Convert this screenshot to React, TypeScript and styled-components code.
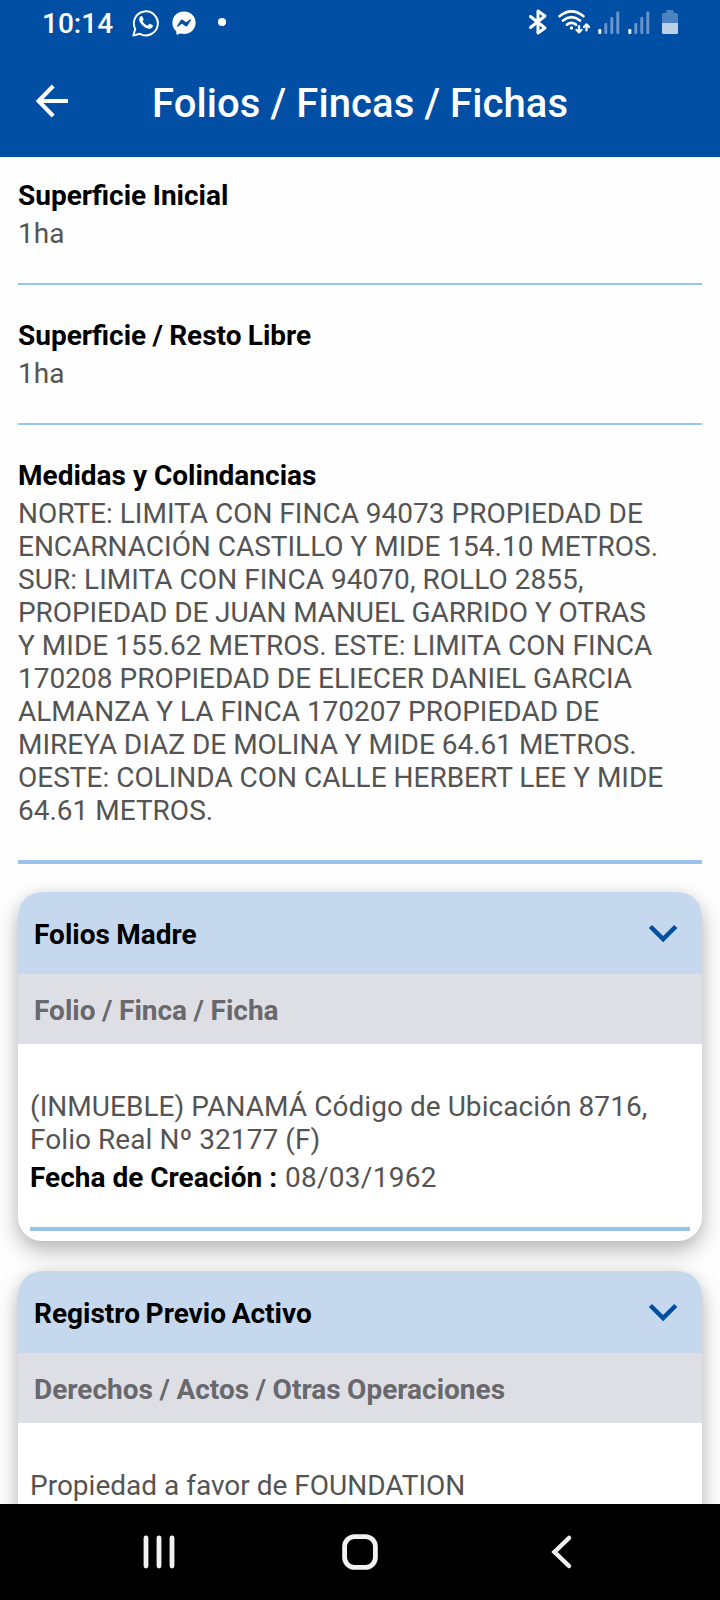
import React from "react";
import styled, { createGlobalStyle } from "styled-components";
import { FaFacebookMessenger } from "react-icons/fa";

const GlobalStyle = createGlobalStyle`
  * { box-sizing: border-box; }
  body {
    margin: 0;
    background: #fefefe;
    font-family: Roboto, "Liberation Sans", sans-serif;
    font-size: 28px;
    line-height: 33px;
    color: #545454;
  }
`;

const Screen = styled.div`
  width: 720px;
  height: 1600px;
  display: flex;
  flex-direction: column;
  overflow: hidden;
  background: #fefefe;
`;

const TopArea = styled.header`
  flex: none;
  height: 157px;
  background: #004fa4;
  color: #fff;
`;

const StatusBar = styled.div`
  height: 48px;
  display: flex;
  justify-content: space-between;
  padding: 0 40px 0 42px;
`;

const StatusGroup = styled.div`
  display: flex;
  align-items: flex-start;
`;

const Clock = styled.span`
  width: 90px;
  padding-top: 7px;
  font-weight: 500;
`;

const WhatsappIcon = styled.svg`
  width: 27px;
  height: 28px;
  margin-top: 9px;
`;

const MessengerIcon = styled(FaFacebookMessenger)`
  width: 24px;
  height: 24px;
  margin: 11px 0 0 13px;
`;

const MoreDot = styled.span`
  width: 8px;
  height: 8px;
  margin: 18px 0 0 22px;
  border-radius: 50%;
  background: #fff;
`;

const TitleBar = styled.div`
  height: 109px;
  display: flex;
  align-items: flex-start;
  padding-left: 36px;
`;

const BackIcon = styled.svg`
  width: 32px;
  height: 34px;
  margin-top: 36px;
`;

const Title = styled.h1`
  margin: 32px 0 0 84px;
  font-size: 40px;
  line-height: 48px;
  font-weight: 500;
  letter-spacing: 0.09px;
`;

const Content = styled.main`
  flex: 1;
  min-height: 0;
  overflow: hidden;
  padding: 0 18px;
`;

const Field = styled.section<{ $first?: boolean; $thick?: boolean }>`
  display: flex;
  flex-direction: column;
  gap: 5px;
  padding: ${(p) => (p.$first ? 22 : 34)}px 0 33px;
  border-bottom: ${(p) => (p.$thick ? 4 : 2)}px solid #98c3ed;
`;

const Label = styled.strong<{ $wordGap?: number }>`
  font-weight: 700;
  color: #000;
  word-spacing: ${(p) => p.$wordGap ?? 0}px;
`;

const Line = styled.span<{ $track?: number }>`
  display: block;
  white-space: nowrap;
  letter-spacing: ${(p) => (p.$track ? `${p.$track}px` : "normal")};
`;

const DateText = styled.span`
  margin-left: 1px;
  letter-spacing: 0.27px;
`;

const Card = styled.section<{ $top: number }>`
  margin-top: ${(p) => p.$top}px;
  padding-bottom: 10px;
  border-radius: 24px;
  background: #fff;
  box-shadow: 0 10px 22px rgba(0, 0, 0, 0.27), 0 0 14px rgba(0, 0, 0, 0.06);
`;

const CardHeader = styled.div`
  height: 82px;
  display: flex;
  justify-content: space-between;
  padding: 26px 24px 0 16px;
  border-radius: 24px 24px 0 0;
  background: #c5d8ee;
`;

const Chevron = styled.svg`
  width: 30px;
  height: 20px;
  margin-top: 6px;
`;

const CardSubheader = styled.div`
  height: 70px;
  padding: 20px 16px 0;
  background: #dedfe5;
  font-weight: 700;
  color: #68686d;
  word-spacing: -0.4px;
`;

const Entry = styled.div`
  display: flex;
  flex-direction: column;
  gap: 5px;
  margin: 0 12px;
  padding: 46px 0 33px;
  border-bottom: 4px solid #98c3ed;
`;

const NavBar = styled.nav`
  flex: none;
  height: 96px;
  display: flex;
  justify-content: space-between;
  align-items: center;
  padding: 0 140px;
  background: #000;
`;

const StatusIcons = () => (
  <svg width="160" height="48" viewBox="520 0 160 48" fill="none" stroke="#fff">
    <path d="M530.5 16.5 L545 28 L538 33 V11 L545 16 L530.5 27.5" strokeWidth="3" strokeLinejoin="round" strokeLinecap="round" />
    <g strokeWidth="2.6" strokeLinecap="round">
      <path d="M559.5 16.2 Q571.5 6.4 583.5 16.2" />
      <path d="M563 20.6 Q571.5 13.8 580 20.6" />
      <path d="M567 24.6 Q571.5 21.2 576 24.6" />
    </g>
    <circle cx="571.5" cy="28" r="1.7" fill="#fff" stroke="none" />
    <path d="M579 26 V32 M576.4 29.8 L579 32.4 L581.6 29.8 M586.5 30.5 V24.5 M583.9 27 L586.5 24.4 L589.1 27" strokeWidth="2.2" strokeLinecap="round" strokeLinejoin="round" />
    {[598, 628].map((x) => (
      <g key={x} stroke="none" fill="#6795c9">
        <rect x={x + 0.3} y="29" width="3" height="5" rx="1" fill="#fff" />
        <rect x={x + 6.3} y="23" width="3" height="11" rx="1" />
        <rect x={x + 12.3} y="17" width="3" height="17" rx="1" />
        <rect x={x + 18.3} y="11.5" width="3" height="22.5" rx="1" />
      </g>
    ))}
    <path d="M662 23 V14.5 Q662 13 663.5 13 H666.5 V11 Q666.5 10 667.5 10 H672.5 Q673.5 10 673.5 11 V13 H676.5 Q678 13 678 14.5 V23 Z" fill="#4d84bf" stroke="none" />
    <path d="M662 23 H678 V32.5 Q678 34 676.5 34 H663.5 Q662 34 662 32.5 Z" fill="#bcd1e8" stroke="none" />
  </svg>
);

type SectionProps = {
  title: string;
  subtitle: string;
  top: number;
  wordGap: number;
  children: React.ReactNode;
};

const Section = ({ title, subtitle, top, wordGap, children }: SectionProps) => (
  <Card $top={top}>
    <CardHeader>
      <Label $wordGap={wordGap}>{title}</Label>
      <Chevron viewBox="0 0 30 20" fill="none" stroke="#004fa4" strokeWidth="4.5">
        <path d="M2.4 2.5 L15.1 15 L27.8 2.5" />
      </Chevron>
    </CardHeader>
    <CardSubheader>{subtitle}</CardSubheader>
    <Entry>{children}</Entry>
  </Card>
);

const boundaries: { text: string; track?: number }[] = [
  { text: "NORTE: LIMITA CON FINCA 94073 PROPIEDAD DE" },
  { text: "ENCARNACIÓN CASTILLO Y MIDE 154.10 METROS.", track: -0.02 },
  { text: "SUR: LIMITA CON FINCA 94070, ROLLO 2855,", track: 0.05 },
  { text: "PROPIEDAD DE JUAN MANUEL GARRIDO Y OTRAS", track: -0.09 },
  { text: "Y MIDE 155.62 METROS. ESTE: LIMITA CON FINCA", track: 0.03 },
  { text: "170208 PROPIEDAD DE ELIECER DANIEL GARCIA", track: 0.02 },
  { text: "ALMANZA Y LA FINCA 170207 PROPIEDAD DE", track: -0.02 },
  { text: "MIREYA DIAZ DE MOLINA Y MIDE 64.61 METROS.", track: -0.02 },
  { text: "OESTE: COLINDA CON CALLE HERBERT LEE Y MIDE" },
  { text: "64.61 METROS." },
];

export default function App() {
  return (
    <Screen>
      <GlobalStyle />
      <TopArea>
        <StatusBar>
          <StatusGroup>
            <Clock>10:14</Clock>
            <WhatsappIcon viewBox="0 0 27 28" fill="none">
              <path
                d="M1.4 26.6 L3.2 19.9 A12 12 0 1 1 7.9 24.8 Z"
                stroke="#fff"
                strokeWidth="2"
                strokeLinejoin="round"
              />
              <path
                d="M8.6 7.3 Q9.8 6.6 10.5 7.7 L11.6 10.2 Q11.7 11 10.4 12.3 Q12.2 15.5 15.6 16.7 L17.1 15 Q17.6 14.6 18.3 14.9 L20.6 16.1 Q21.1 16.6 20.6 18 Q19.2 20.1 16.7 19.7 Q10.3 18.2 7.5 12.3 Q6.4 9 8.6 7.3 Z"
                fill="#fff"
              />
            </WhatsappIcon>
            <MessengerIcon />
            <MoreDot />
          </StatusGroup>
          <StatusIcons />
        </StatusBar>
        <TitleBar>
          <BackIcon viewBox="0 0 32 34" fill="none" stroke="#fff" strokeWidth="4">
            <path d="M17.2 2 L2.6 17 L17.2 32 M2.6 17 H32" />
          </BackIcon>
          <Title>Folios / Fincas / Fichas</Title>
        </TitleBar>
      </TopArea>
      <Content>
        <Field $first>
          <Label $wordGap={-0.5}>Superficie Inicial</Label>
          <Line>1ha</Line>
        </Field>
        <Field>
          <Label $wordGap={-0.7}>Superficie / Resto Libre</Label>
          <Line>1ha</Line>
        </Field>
        <Field $thick>
          <Label>Medidas y Colindancias</Label>
          <div>
            {boundaries.map(({ text, track }) => (
              <Line key={text} $track={track}>{text}</Line>
            ))}
          </div>
        </Field>
        <Section title="Folios Madre" subtitle="Folio / Finca / Ficha" top={28} wordGap={-0.5}>
          <div>
            <Line $track={0.05}>(INMUEBLE) PANAMÁ Código de Ubicación 8716,</Line>
            <Line $track={0.06}>Folio Real Nº 32177 (F)</Line>
          </div>
          <span>
            <Label>Fecha de Creación : </Label>
            <DateText>08/03/1962</DateText>
          </span>
        </Section>
        <Section title="Registro Previo Activo" subtitle="Derechos / Actos / Otras Operaciones" top={30} wordGap={-1.3}>
          <Line>Propiedad a favor de FOUNDATION</Line>
        </Section>
      </Content>
      <NavBar>
        <svg width="40" height="40" viewBox="0 0 40 40" stroke="#f2f2f2" strokeWidth="4.8" strokeLinecap="round">
          <path d="M6 6 V34 M19 6 V34 M32 6 V34" />
        </svg>
        <svg width="40" height="40" viewBox="0 0 40 40" fill="none" stroke="#f2f2f2" strokeWidth="4.8">
          <rect x="4.6" y="4.6" width="30.8" height="30.8" rx="10" />
        </svg>
        <svg width="40" height="40" viewBox="0 0 40 40" fill="none" stroke="#f2f2f2" strokeWidth="4.5" strokeLinecap="round">
          <path d="M29 6 L14.5 20 L29 34" />
        </svg>
      </NavBar>
    </Screen>
  );
}
